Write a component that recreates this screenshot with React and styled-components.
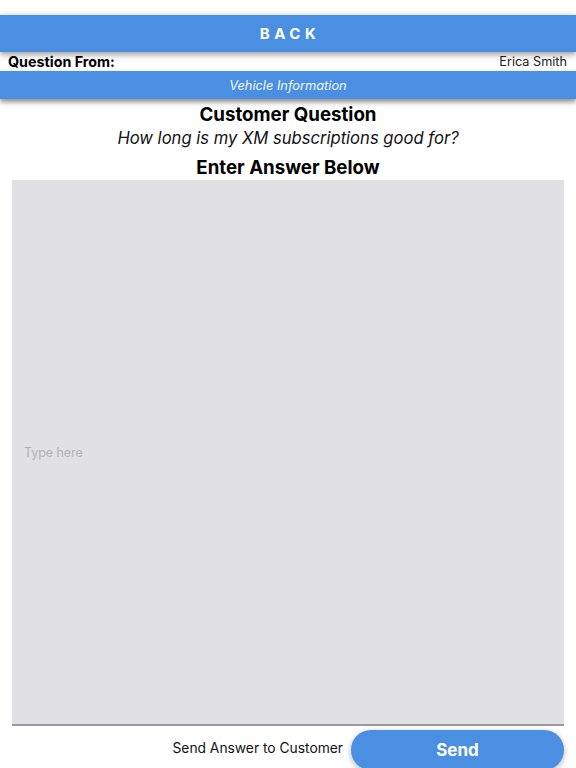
import styled, { createGlobalStyle } from 'styled-components';

const BLUE = '#4a8fe2';

const Global = createGlobalStyle`
    html, body {
        margin: 0;
        padding: 0;
        background: #fff;
        font-family: Inter, Roboto, "Liberation Sans", sans-serif;
    }
`;

export default function App() {
    return (
        <Page>
            <Global />
            <BackBar>BACK</BackBar>
            <InfoRow>
                <strong>Question From:</strong>
                <span>Erica Smith</span>
            </InfoRow>
            <VehicleBar>Vehicle Information</VehicleBar>
            <Title>Customer Question</Title>
            <Question>How long is my XM subscriptions good for?</Question>
            <Title small>Enter Answer Below</Title>
            <AnswerBox placeholder="Type here" />
            <Footer>
                <FooterLabel>Send Answer to Customer</FooterLabel>
                <SendButton>Send</SendButton>
            </Footer>
        </Page>
    );
}

const Page = styled.div`
    display: flex;
    flex-direction: column;
    height: 768px;
    overflow: hidden;
    padding-top: 15px;
    box-sizing: border-box;
`;

const BackBar = styled.div`
    height: 37px;
    background: ${BLUE};
    color: #fff;
    display: flex;
    align-items: center;
    justify-content: center;
    font-weight: 700;
    font-size: 15px;
    letter-spacing: 4.5px;
    padding-left: 4px;
    box-shadow: 0 3px 6px rgba(0, 0, 0, 0.35), 0 -2px 5px rgba(0, 0, 0, 0.08);
    position: relative;
    z-index: 2;
`;

const InfoRow = styled.div`
    height: 19px;
    display: flex;
    align-items: center;
    justify-content: space-between;
    padding: 0 9px 0 8px;
    font-size: 14.3px;
    color: #111;
    strong {
        font-weight: 700;
        color: #000;
    }
    span {
        font-size: 12.7px;
        color: #222;
    }
`;

const VehicleBar = styled.div`
    height: 28px;
    background: ${BLUE};
    color: #f2f6fc;
    display: flex;
    align-items: center;
    justify-content: center;
    font-style: italic;
    font-size: 12.8px;
    box-shadow: 0 3px 5px rgba(0, 0, 0, 0.45);
    position: relative;
    z-index: 1;
`;

const Title = styled.div`
    text-align: center;
    font-weight: 700;
    font-size: 18.7px;
    color: #000;
    margin-top: ${({small}) => small ? '8px' : '5px'};
    line-height: 22px;
`;

const Question = styled.div`
    text-align: center;
    font-style: italic;
    font-size: 16.6px;
    color: #111;
    line-height: 22px;
    margin-top: 1px;
`;

const AnswerBox = styled.textarea`
    flex: 1;
    margin: 1px 12px 0 12px;
    background: #e1e0e2;
    border: none;
    border-bottom: 2px solid #9a9a9a;
    resize: none;
    outline: none;
    padding: 0 12px;
    font-family: inherit;
    font-size: 12.4px;
    display: block;
    box-sizing: border-box;
    padding-top: 265px;
    &::placeholder {
        color: #b3b2b5;
    }
`;

const Footer = styled.div`
    height: 42px;
    display: flex;
    align-items: flex-start;
    justify-content: flex-end;
    gap: 8px;
    padding-right: 12px;
    padding-top: 4px;
    box-sizing: border-box;
`;

const FooterLabel = styled.span`
    font-size: 13.8px;
    color: #111;
    margin-top: 10px;
`;

const SendButton = styled.button`
    width: 213px;
    height: 40px;
    border: none;
    border-radius: 20px;
    background: ${BLUE};
    color: #fff;
    font-family: inherit;
    font-weight: 700;
    font-size: 17px;
    box-shadow: 0 2px 6px rgba(0, 0, 0, 0.3);
`;
